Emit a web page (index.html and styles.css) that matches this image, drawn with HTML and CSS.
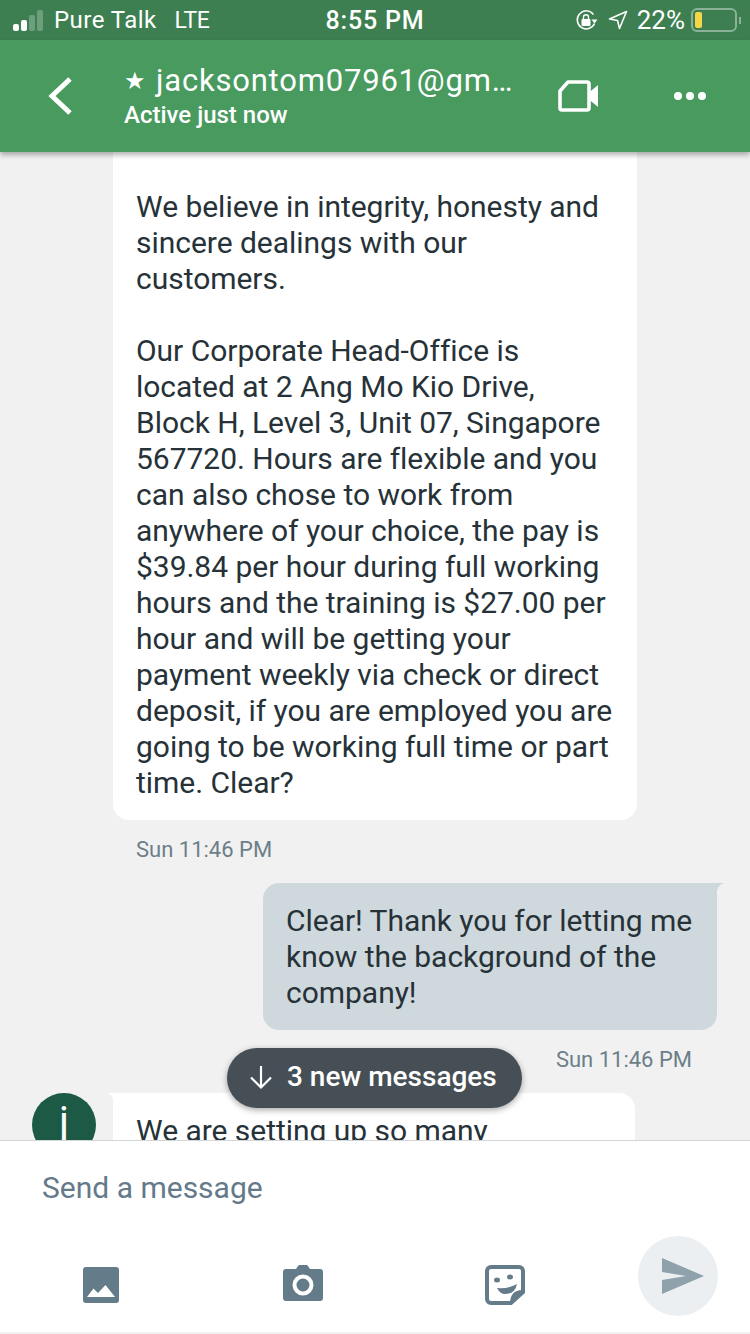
FILE: index.html
```html
<!DOCTYPE html>
<html lang="en">
<head>
    <meta charset="UTF-8">
    <meta name="viewport" content="width=device-width, initial-scale=1.0">
    <title>Chat</title>
    <link rel="stylesheet" href="styles.css">
</head>
<body>
    <div class="screen">
        <!-- Status bar -->
        <div class="status-bar">
            <div class="status-left">
                <span class="signal">
                    <i class="on s1"></i><i class="on s2"></i><i class="s3"></i><i class="s4"></i>
                </span>
                <span class="carrier">Pure Talk</span>
                <span class="network">LTE</span>
            </div>
            <div class="status-time">8:55 PM</div>
            <div class="status-right">
                <svg class="lock-icon" width="23" height="23" viewBox="0 0 23 23" fill="none">
                    <path d="M19.5 14.5A9 9 0 1 1 18.5 5.5" stroke="#fff" stroke-width="1.5"/>
                    <path d="M16.5 10.5h6l-3 4z" fill="#fff"/>
                    <rect x="6.5" y="10" width="9" height="7" rx="1" fill="#fff"/>
                    <path d="M8.5 10V8.2a2.5 2.5 0 0 1 5 0V10" stroke="#fff" stroke-width="1.4"/>
                </svg>
                <svg class="loc-icon" width="20" height="20" viewBox="0 0 20 20" fill="none">
                    <path d="M18.5 1.5 1.5 9l8 1.5L11.5 18.500z" stroke="#fff" stroke-width="1.6" stroke-linejoin="round"/>
                </svg>
                <span class="battery-pct">22%</span>
                <span class="battery"><span class="battery-fill"></span></span>
                <span class="battery-nub"></span>
            </div>
        </div>

        <!-- Header -->
        <div class="header">
            <svg class="back-icon" width="26" height="40" viewBox="0 0 26 40" fill="none">
                <path d="M23 3 5 20l18 17" stroke="#fff" stroke-width="5"/>
            </svg>
            <div class="title-block">
                <div class="title"><span class="star">★</span><span class="name">jacksontom07961@gm…</span></div>
                <div class="subtitle">Active just now</div>
            </div>
            <svg class="video-icon" width="40" height="32" viewBox="0 0 40 32" fill="none">
                <path d="M10 2h19a2 2 0 0 1 2 2v24a2 2 0 0 1-2 2H4a2 2 0 0 1-2-2V11z" stroke="#fff" stroke-width="3.600" stroke-linejoin="round"/>
                <path d="M31 12.500 40 5v22l-9-7.500z" fill="#fff"/>
            </svg>
            <div class="more-icon"><i></i><i></i><i></i></div>
        </div>

        <!-- Messages -->
        <div class="chat">
            <div class="bubble received first">
                We believe in integrity, honesty and sincere dealings with our customers.<br><br>
                Our Corporate Head-Office is located at 2 Ang Mo Kio Drive, Block H, Level 3, Unit 07, Singapore 567720. Hours are flexible and you can also chose to work from anywhere of your choice, the pay is $39.84 per hour during full working hours and the training is $27.00 per hour and will be getting your payment weekly via check or direct deposit, if you are employed you are going to be working full time or part time. Clear?
            </div>
            <div class="stamp stamp-in">Sun 11:46 PM</div>

            <div class="bubble sent">Clear! Thank you for letting me know the background of the company!</div>
            <div class="stamp stamp-out">Sun 11:46 PM</div>

            <div class="incoming">
                <div class="avatar">j</div>
                <div class="bubble received tail">We are setting up so many</div>
            </div>

            <div class="new-pill">
                <svg width="26" height="26" viewBox="0 0 26 26" fill="none">
                    <path d="M13 2v21M3 13.500 13 23.500l10-10" stroke="#fff" stroke-width="2.200"/>
                </svg>
                <span>3 new messages</span>
            </div>
        </div>

        <!-- Composer -->
        <div class="composer">
            <div class="placeholder">Send a message</div>
            <div class="tools">
                <svg class="tool" width="36" height="36" viewBox="0 0 36 36">
                    <rect width="36" height="36" rx="3" fill="#647b8a"/>
                    <path d="M4 30 10.500 21.500 15 26 22.500 18 32 30z" fill="#fff"/>
                </svg>
                <svg class="tool tool-camera" width="40" height="36" viewBox="0 0 40 36">
                    <path d="M13 4 15 1a2 2 0 0 1 1.500-1h7A2 2 0 0 1 25 1l2 3h10a3 3 0 0 1 3 3v26a3 3 0 0 1-3 3H3a3 3 0 0 1-3-3V7a3 3 0 0 1 3-3z" fill="#647b8a"/>
                    <circle cx="20" cy="20" r="8.500" fill="none" stroke="#fff" stroke-width="4"/>
                </svg>
                <svg class="tool" width="40" height="40" viewBox="0 0 40 40" fill="none">
                    <path d="M6 2h28a4 4 0 0 1 4 4v21L26 38H6a4 4 0 0 1-4-4V6a4 4 0 0 1 4-4z" stroke="#647b8a" stroke-width="4"/>
                    <path d="M39 25q-14-1-14 14z" fill="#647b8a"/>
                    <ellipse cx="12" cy="15" rx="3" ry="2.500" fill="#647b8a"/>
                    <ellipse cx="25" cy="12" rx="3" ry="2.500" fill="#647b8a"/>
                    <path d="M12 23q11 1 20-4-2 10-12 10-5 0-8-6z" fill="#647b8a"/>
                </svg>
                <div class="send-btn">
                    <svg width="42" height="36" viewBox="0 0 42 36">
                        <path d="M0 0 42 18 0 36V22l24-4-24-4z" fill="#8fa1aa"/>
                    </svg>
                </div>
            </div>
        </div>
    </div>
</body>
</html>
```

FILE: styles.css
```css
body {
    margin: 0;
    font-family: Roboto, "Liberation Sans", sans-serif;
    background-color: #f1f1f1;
}
.screen {
    width: 750px;
    height: 1334px;
    display: flex;
    flex-direction: column;
    overflow: hidden;
}

/* status bar */
.status-bar {
    height: 40px;
    flex: none;
    background-color: #3d7f50;
    color: #fff;
    font-size: 25px;
    display: grid;
    grid-template-columns: 1fr auto 1fr;
    align-items: center;
    padding: 0 9px 0 13px;
    box-sizing: border-box;
}
.status-left, .status-right {
    display: flex;
    align-items: center;
}
.status-right {
    justify-content: flex-end;
}
.signal {
    display: flex;
    align-items: flex-end;
    gap: 2px;
    height: 22px;
    margin-right: 11px;
}
.signal i {
    width: 6px;
    background-color: rgba(255, 255, 255, 0.25);
    border-radius: 2px;
}
.signal .on {
    background-color: #fff;
}
.s1 { height: 7px; }
.s2 { height: 11px; }
.s3 { height: 16px; }
.s4 { height: 21px; }
.carrier {
    font-size: 24px;
    letter-spacing: 0.45px;
}
.network {
    margin-left: 18px;
    font-size: 23px;
    letter-spacing: -0.4px;
}
.status-time {
    font-weight: 500;
    letter-spacing: 0.8px;
    font-size: 25px;
    margin-right: 4px;
}
.lock-icon {
    margin-right: 10px;
}
.loc-icon {
    margin-right: 9px;
}
.battery-pct {
    margin-right: 6px;
    font-size: 26px;
}
.battery {
    border: 2px solid rgba(255, 255, 255, 0.4);
    border-radius: 6px;
    padding: 2px;
    width: 38px;
    height: 16px;
    display: block;
}
.battery-fill {
    display: block;
    width: 7px;
    height: 100%;
    background-color: #f6d646;
    border-radius: 2px;
}
.battery-nub {
    width: 2px;
    height: 7px;
    margin-left: 2px;
    background-color: rgba(255, 255, 255, 0.4);
}

/* header */
.header {
    height: 112px;
    flex: none;
    background-color: #489a5f;
    color: #fff;
    display: flex;
    align-items: center;
    padding-left: 47px;
    box-sizing: border-box;
    box-shadow: 0 3px 5px rgba(0, 0, 0, 0.3);
    position: relative;
    z-index: 2;
}
.back-icon {
    flex: none;
    margin: 0 51px 0 0;
}
.title-block {
    width: 434px;
    flex: none;
    margin-top: -2px;
}
.title {
    display: flex;
    align-items: center;
    height: 38px;
    font-size: 31px;
    letter-spacing: 0.8px;
}
.star {
    font-size: 24px;
    width: 32px;
    font-family: "DejaVu Sans", sans-serif;
    letter-spacing: 0;
}
.subtitle {
    font-size: 24px;
    font-weight: 500;
    margin-top: 1px;
}
.video-icon {
    flex: none;
    margin-right: 76px;
}
.more-icon {
    display: flex;
    gap: 4px;
}
.more-icon i {
    width: 8px;
    height: 8px;
    border-radius: 50%;
    background-color: #fff;
}

/* messages */
.chat {
    flex: 1;
    min-height: 0;
    overflow: hidden;
    position: relative;
    background-color: #f1f1f1;
}
.bubble {
    font-size: 30px;
    line-height: 36px;
    letter-spacing: -0.03px;
    color: #263238;
    padding: 20px 20px 19px 23px;
    box-sizing: border-box;
    position: relative;
}
.received {
    background-color: #fff;
    border-radius: 0 16px 16px 16px;
}
.first {
    width: 524px;
    margin-left: 113px;
    padding-top: 37px;
    padding-right: 23px;
    border-radius: 0 0 16px 16px;
}
.sent {
    width: 454px;
    margin-left: 263px;
    margin-top: 20px;
    background-color: #cfd8dc;
    border-radius: 16px 0 16px 16px;
}
.sent::after {
    content: "";
    position: absolute;
    top: 0;
    right: -10px;
    width: 10px;
    height: 10px;
    background: radial-gradient(circle at 100% 100%, transparent 10px, #cfd8dc 10.500px);
}
.tail::before {
    content: "";
    position: absolute;
    top: 0;
    left: -8px;
    width: 8px;
    height: 8px;
    background: radial-gradient(circle at 0 100%, transparent 8px, #fff 8.500px);
}
.stamp {
    font-size: 22px;
    line-height: 26px;
    color: #6c7f89;
}
.stamp-in {
    margin: 17px 0 0 136px;
}
.stamp-out {
    margin: 17px 58px 0 0;
    text-align: right;
}
.incoming {
    display: flex;
    margin: 20px 0 0 32px;
}
.avatar {
    width: 64px;
    height: 64px;
    flex: none;
    border-radius: 50%;
    background-color: #1c5a46;
    color: #fff;
    font-size: 42px;
    line-height: 58px;
    text-align: center;
}
.incoming .bubble {
    width: 522px;
    margin-left: 17px;
}
.new-pill {
    position: absolute;
    left: 227px;
    top: 896px;
    width: 295px;
    height: 60px;
    border-radius: 30px;
    background-color: #454f55;
    color: #fff;
    font-size: 28px;
    font-weight: 500;
    display: flex;
    align-items: center;
    gap: 13px;
    padding: 0 0 3px 21px;
    box-sizing: border-box;
    box-shadow: 0 2px 6px rgba(0, 0, 0, 0.35);
}

/* composer */
.composer {
    height: 194px;
    flex: none;
    background-color: #fff;
    border-top: 1px solid #d4d6d7;
    border-bottom: 2px solid #f1f1f1;
    box-sizing: border-box;
}
.placeholder {
    font-size: 30px;
    line-height: 36px;
    color: #64798a;
    padding: 29px 0 0 42px;
}
.tools {
    display: grid;
    grid-template-columns: 200px 202px 153px 80px;
    align-items: center;
    padding-left: 83px;
    margin-top: 30px;
}
.tool {
    margin-top: 18px;
}
.tool-camera {
    margin-top: 14px;
}
.send-btn {
    width: 80px;
    height: 80px;
    border-radius: 50%;
    background-color: #eceff1;
    display: flex;
    align-items: center;
    justify-content: center;
}
.send-btn svg {
    margin-left: 9px;
}
```
